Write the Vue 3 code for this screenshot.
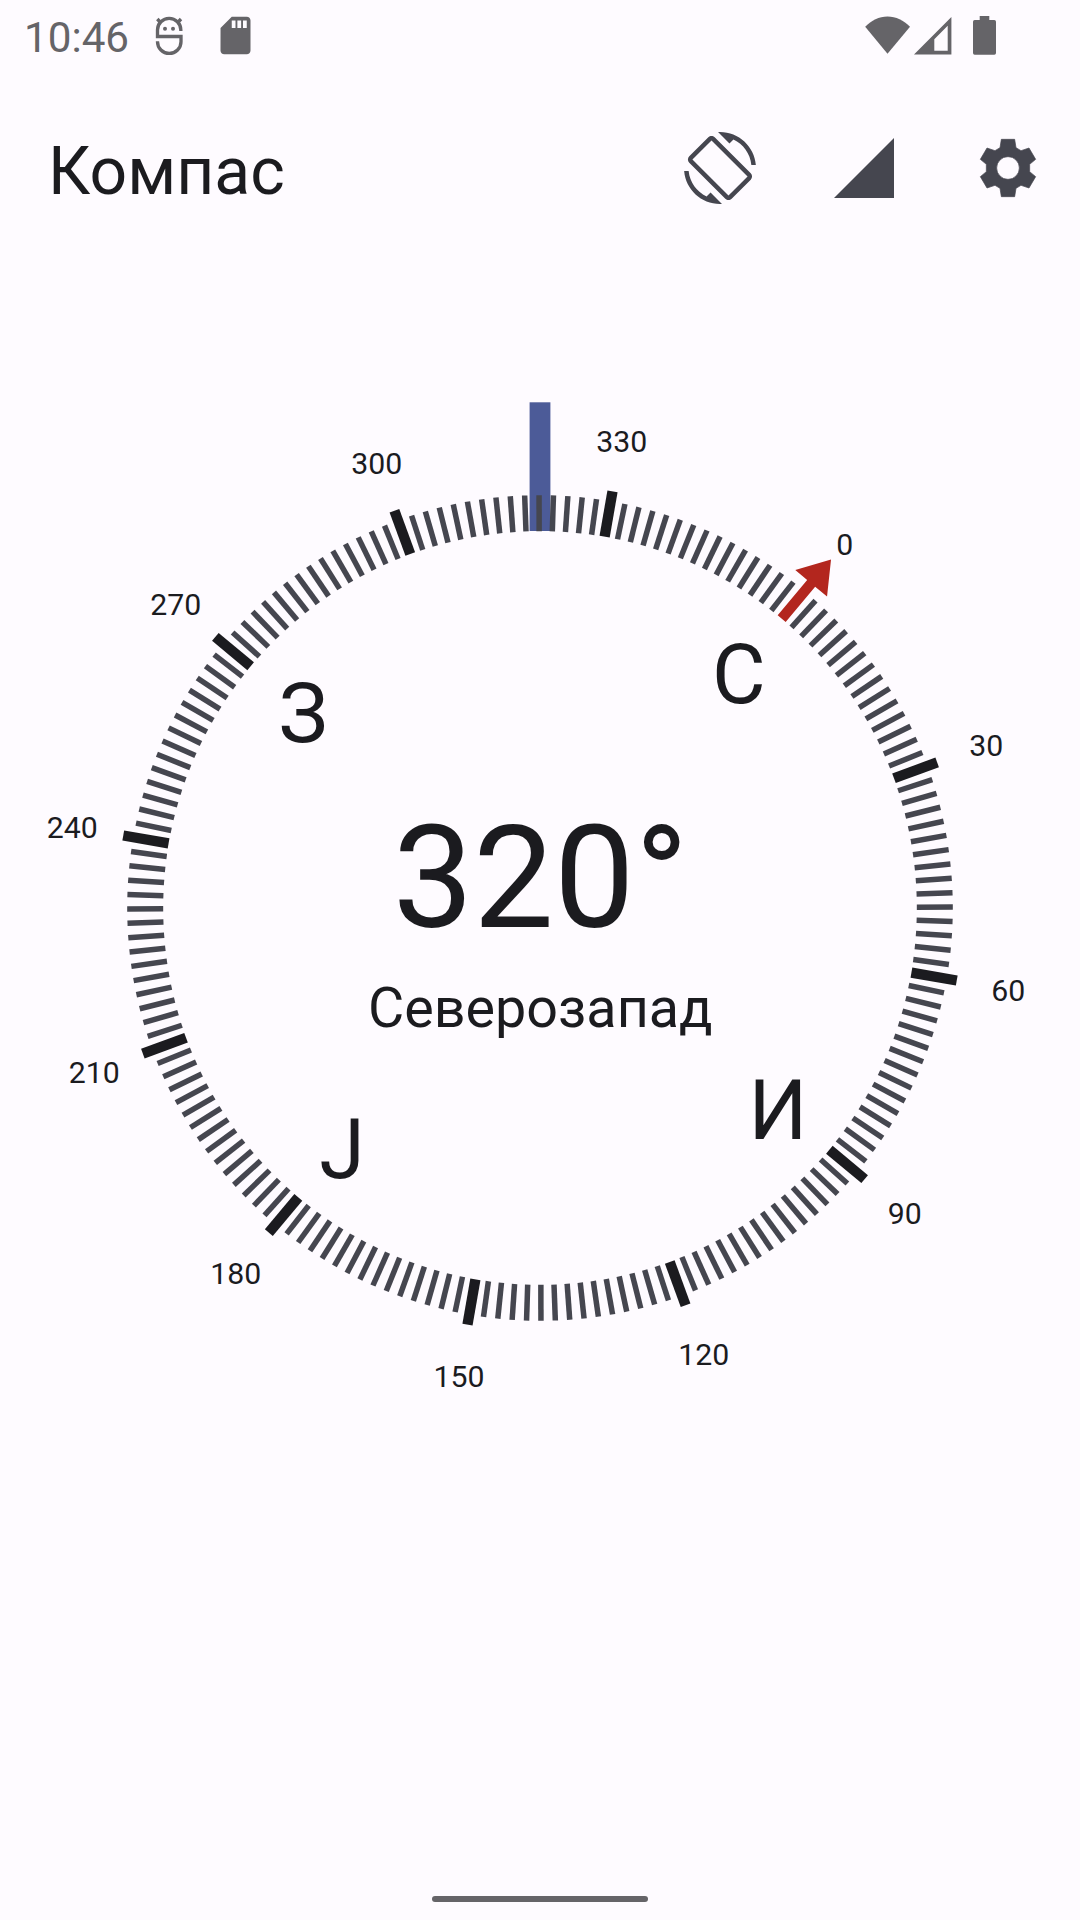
<script setup>
const heading = 320.13
const labels = Array.from({ length: 12 }, (_, i) => i * 30)
const ticks = Array.from({ length: 180 }, (_, i) => i * 2).filter((d) => d % 30 !== 0)
const majors = labels.filter((d) => d !== 0)
const cardinals = [
  { text: 'С', deg: 0 },
  { text: 'И', deg: 90 },
  { text: 'Ј', deg: 180 },
  { text: 'З', deg: 270 },
]
const turn = (deg) => `rotate(${deg - heading})`
const at = (deg, r) => {
  const a = ((deg - heading) * Math.PI) / 180
  return { x: r * Math.sin(a), y: -r * Math.cos(a) }
}
</script>

<template>
  <div class="screen">
    <div class="status">
      <span class="time">10:46</span>
      <svg class="mascot" width="30" height="40" viewBox="0 0 90 120">
        <g fill="none" stroke="#656468" stroke-width="10">
          <path d="M80.5 45V42A35 35 0 0 0 10.500 42V61.500H81V77A35.250 35.250 0 0 1 10.500 77V76" />
          <path d="M10 9L21 21M81 9L70 21" />
        </g>
        <circle cx="33" cy="38" r="6" fill="#656468" />
        <circle cx="57" cy="38" r="6" fill="#656468" />
      </svg>
      <svg class="card" width="45" height="45" viewBox="0 0 24 24" fill="#656468">
        <path d="M18 2h-8L4.02 8 4 20c0 1.1.9 2 2 2h12c1.1 0 2-.9 2-2V4c0-1.1-.9-2-2-2zm-6 6h-2V4h2v4zm3 0h-2V4h2v4zm3 0h-2V4h2v4z" />
      </svg>
      <svg class="signals" width="140" height="45" viewBox="860 13 140 45" fill="#656468">
        <path d="M887.5 53.7L865.2 26.7C871.5 20.5 879 16.4 887.5 16.4S903.7 20.5 910 26.7Z" />
        <path fill-rule="evenodd" d="M914 54.4L951.4 17V54.4ZM934.3 39.3V50.7H947.7V25.7Z" />
        <path d="M979.7 20V16H989.3V20H994.3Q996 20 996 21.7V53Q996 54.7 994.3 54.7H974.7Q973 54.7 973 53V21.7Q973 20 974.7 20Z" />
      </svg>
    </div>

    <header class="bar">
      <h1>Компас</h1>
      <div class="actions">
        <svg viewBox="0 0 24 24">
          <path d="M16.48 2.52c3.27 1.55 5.61 4.72 5.97 8.48h1.5C23.44 4.84 18.29 0 12 0l-.66.03 3.81 3.81 1.33-1.32zm-6.25-.77c-.59-.59-1.54-.59-2.12 0L1.75 8.11c-.59.59-.59 1.54 0 2.12l12.02 12.02c.59.59 1.54.59 2.12 0l6.36-6.36c.59-.59.59-1.54 0-2.12L10.23 1.75zm4.6 19.44L2.81 9.17l6.36-6.36 12.02 12.02-6.36 6.36zm-7.31.29C4.25 19.94 1.91 16.76 1.55 13H.05C.56 19.16 5.71 24 12 24l.66-.03-3.81-3.81-1.33 1.32z" />
        </svg>
        <svg viewBox="0 0 24 24"><path d="M2 22h20V2z" /></svg>
        <svg viewBox="-108 -108 216 216">
          <path
            fill-rule="evenodd"
            stroke="#45464f"
            stroke-width="2"
            stroke-linejoin="round"
            d="M-20 -86H20L24 -61L39 -52L63 -60L83 -26L65 -11V11L83 26L63 60L39 52L24 61L20 86H-20L-24 61L-39 52L-63 60L-83 26L-65 11V-11L-83 -26L-63 -60L-39 -52L-24 -61ZM0 -34A34 34 0 1 0 0 34A34 34 0 1 0 0 -34Z"
          />
        </svg>
      </div>
    </header>

    <main>
      <svg class="compass" width="1080" height="1080" viewBox="-540 -540 1080 1080">
        <rect x="-10.4" y="-505.7" width="20.8" height="128.7" fill="#4c5b98" />
        <rect v-for="d in ticks" :key="'t' + d" class="tick" x="-2.75" y="-412.8" width="5.5" height="36" :transform="turn(d)" />
        <rect v-for="d in majors" :key="'m' + d" class="major" x="-5.15" y="-423" width="10.3" height="46" :transform="turn(d)" />
        <path d="M-5.2 -377V-423H-20.7L0 -454L20.7 -423H5.2V-377Z" fill="#b3261e" :transform="turn(0)" />
        <text v-for="d in labels" :key="'l' + d" class="label" :x="at(d, 475).x + 0.3" :y="at(d, 475).y + 11.5">{{ d }}</text>
        <text v-for="c in cardinals" :key="c.text" class="cardinal" :x="at(c.deg, 309.5).x + 0.5" :y="at(c.deg, 309.5).y + 32.3">{{ c.text }}</text>
        <text class="degrees" x="0.5" y="19">320°</text>
        <text class="direction" x="0.3" y="119">Северозапад</text>
      </svg>
    </main>

    <div class="nav"><span></span></div>
  </div>
</template>

<style>
body {
  background: #fefbff;
}
</style>

<style scoped>
.screen {
  width: 1080px;
  height: 1920px;
  display: flex;
  flex-direction: column;
  background: #fefbff;
  color: #1b1b1f;
  font-family: Roboto, sans-serif;
  overflow: hidden;
}
.status {
  height: 72px;
  display: flex;
  align-items: flex-start;
  padding: 13px 80px 0 24px;
  box-sizing: border-box;
}
.time {
  width: 130px;
  font-size: 42.2px;
  line-height: 49px;
  color: #656468;
}
.mascot {
  margin-top: 3px;
}
.card {
  margin-left: 28.5px;
}
.signals {
  margin-left: auto;
}
.bar {
  height: 192px;
  display: flex;
  align-items: center;
  justify-content: space-between;
  padding: 0 36px 0 48px;
  box-sizing: border-box;
}
h1 {
  margin: 7px 0 0;
  font-size: 66px;
  font-weight: 400;
}
.actions {
  display: flex;
  gap: 72px;
}
.actions svg {
  width: 72px;
  height: 72px;
  fill: #45464f;
}
main {
  flex: 1;
  padding-top: 104px;
}
.compass {
  display: block;
}
.tick {
  fill: #45464f;
}
.major {
  fill: #1b1b1f;
}
text {
  fill: #1b1b1f;
  text-anchor: middle;
}
.label {
  font-size: 30.25px;
}
.cardinal {
  font-size: 82.5px;
}
.degrees {
  font-size: 143.5px;
}
.direction {
  font-size: 55.7px;
}
.nav {
  height: 24px;
  display: flex;
  justify-content: center;
}
.nav span {
  width: 216px;
  height: 6px;
  border-radius: 3px;
  background: #656468;
}
</style>
